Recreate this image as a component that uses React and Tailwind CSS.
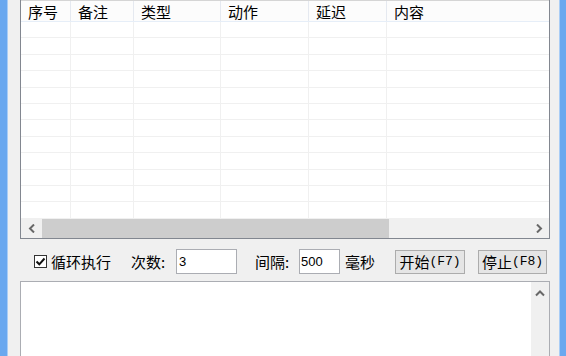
import React from "react";

const cols = [
  { label: "序号", w: "w-[50px]" },
  { label: "备注", w: "w-[63px]" },
  { label: "类型", w: "w-[87px]" },
  { label: "动作", w: "w-[88px]" },
  { label: "延迟", w: "w-[78px]" },
  { label: "内容", w: "flex-1" },
];

const rows = Array.from({ length: 13 });

const App = () => {
  return (
    <div
      className="w-[566px] h-[356px] flex overflow-hidden bg-[#f0f0f0] text-black text-[15px] leading-none"
      style={{ fontFamily: '"Noto Sans CJK SC", "Liberation Sans", sans-serif' }}
    >
      {/* left window frame */}
      <div className="w-[8px] h-full bg-[#6aa8ef] border-r border-[#a9cdf6]" />

      <div className="flex-1 flex flex-col pl-[12px] pr-[9px]">
        {/* list view */}
        <div className="h-[239px] flex flex-col bg-white border-x border-b border-[#828790]">
          {/* header */}
          <div className="h-[22px] flex bg-[#fcfcfc] border-t border-[#d5d5d5] border-b border-b-[#e6eef8]">
            {cols.map((c) => (
              <div
                key={c.label}
                className={`${c.w} h-full pl-[7px] flex items-center border-r border-[#e5e9f0] last:border-r-0`}
              >
                {c.label}
              </div>
            ))}
          </div>

          {/* body */}
          <div className="h-[197px] overflow-hidden">
            {rows.map((_, i) => (
              <div key={i} className="h-[16.4px] flex border-b border-[#f0f0f0]">
                {cols.map((c) => (
                  <div key={c.label} className={`${c.w} h-full border-r border-[#f0f0f0] last:border-r-0`} />
                ))}
              </div>
            ))}
          </div>

          {/* horizontal scrollbar */}
          <div className="h-[19px] flex bg-[#f0f0f0]">
            <div className="w-[21px] flex items-center justify-center">
              <svg width="8" height="9" viewBox="0 0 8 9">
                <path d="M6 0.5 L2 4.5 L6 8.5" fill="none" stroke="#686868" strokeWidth="2" />
              </svg>
            </div>
            <div className="w-[347px] bg-[#cdcdcd]" />
            <div className="flex-1" />
            <div className="w-[21px] flex items-center justify-center">
              <svg width="8" height="9" viewBox="0 0 8 9">
                <path d="M2 0.5 L6 4.5 L2 8.5" fill="none" stroke="#686868" strokeWidth="2" />
              </svg>
            </div>
          </div>
        </div>

        {/* controls row */}
        <div className="mt-[10px] h-[25px] flex items-center">
          <div className="ml-[14px] w-[13px] h-[13px] border border-[#333] bg-white flex items-center justify-center">
            <svg width="11" height="11" viewBox="0 0 11 11">
              <path d="M1.5 5.5 L4.3 8.3 L9.5 2.5" fill="none" stroke="#111" strokeWidth="2" />
            </svg>
          </div>
          <span className="ml-[4px] w-[60px]">循环执行</span>
          <span className="ml-[20px] w-[45px]">次数:</span>
          <div className="w-[61px] h-[25px] bg-white border border-[#abadb3] flex items-center pl-[2px] text-[13px]" style={{ fontFamily: '"Liberation Sans", sans-serif' }}>
            3
          </div>
          <span className="ml-[18px] w-[44px]">间隔:</span>
          <div className="w-[41px] h-[25px] bg-white border border-[#abadb3] flex items-center pl-[1px] text-[13px]" style={{ fontFamily: '"Liberation Sans", sans-serif' }}>
            500
          </div>
          <span className="ml-[5px] w-[30px]">毫秒</span>
          <div className="ml-[20px] w-[70px] h-[24px] border border-[#acacac] bg-[#e5e5e5] flex items-center justify-center">
            开始<span className="text-[13px]" style={{ fontFamily: '"Liberation Mono", monospace' }}>(F7)</span>
          </div>
          <div className="ml-[13px] w-[69px] h-[24px] border border-[#acacac] bg-[#e5e5e5] flex items-center justify-center">
            停止<span className="text-[13px]" style={{ fontFamily: '"Liberation Mono", monospace' }}>(F8)</span>
          </div>
        </div>

        {/* log box */}
        <div className="mt-[7px] flex-1 flex bg-white border border-[#abadb3] border-b-0">
          <div className="flex-1" />
          <div className="w-[18px] bg-[#f0f0f0] flex justify-center pt-[8px]">
            <svg width="10" height="7" viewBox="0 0 10 7">
              <path d="M1 5.5 L5 1.5 L9 5.5" fill="none" stroke="#686868" strokeWidth="2" />
            </svg>
          </div>
        </div>
      </div>

      {/* right window frame */}
      <div className="w-[7px] h-full bg-[#6aa8ef] border-l border-[#a9cdf6]" />
    </div>
  );
};

export default App;
